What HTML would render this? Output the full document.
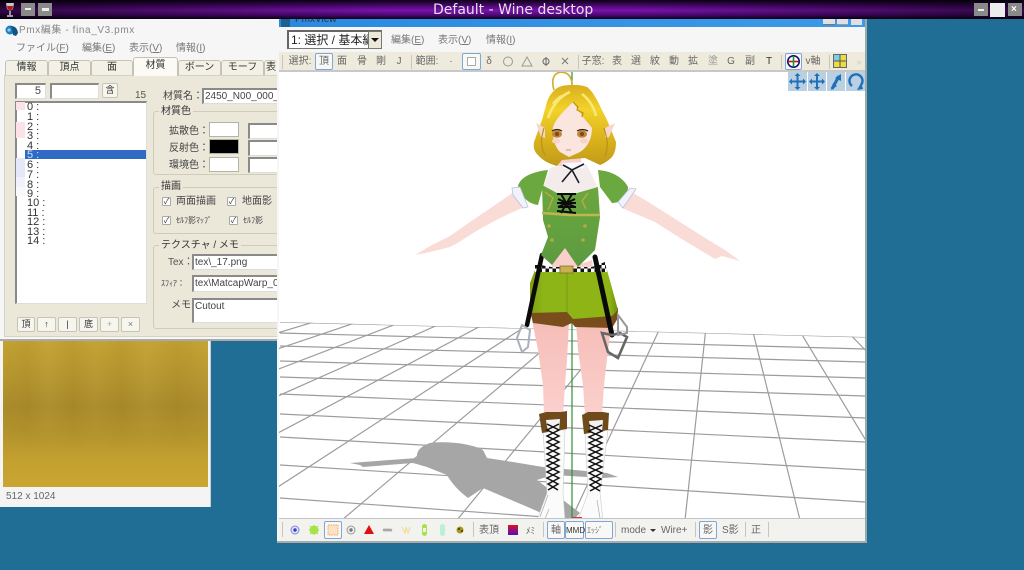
<!DOCTYPE html>
<html lang="ja"><head><meta charset="utf-8"><title>Default - Wine desktop</title>
<style>
html,body{margin:0;padding:0;background:#206d96;}
#root{position:relative;width:1024px;height:570px;overflow:hidden;background:#206d96;font-family:"Liberation Sans","Noto Sans CJK JP",sans-serif;font-size:10px;color:#555;filter:blur(.35px);}
.a{position:absolute;box-sizing:border-box;}
.t{position:absolute;white-space:nowrap;line-height:12px;}
.in{position:absolute;box-sizing:border-box;background:#fff;border:1px solid #ddd;border-top:2px solid #8a8a8a;border-left:2px solid #8a8a8a;overflow:hidden;white-space:nowrap;color:#444;font-size:10px;line-height:13px;padding-left:1px;}
.tab{position:absolute;box-sizing:border-box;top:60px;height:15px;background:#f3f1e6;border:1px solid #c4c2b4;border-bottom:none;border-radius:3px 3px 0 0;text-align:center;color:#333;font-size:10px;line-height:14px;overflow:hidden;white-space:nowrap;}
.grp{position:absolute;box-sizing:border-box;border:1px solid #cfccbc;border-radius:3px;}
.gl{position:absolute;background:#ebe8da;padding:0 2px;font-size:10px;line-height:12px;color:#333;white-space:nowrap;}
.sw{position:absolute;box-sizing:border-box;background:#fff;border:1px solid #b5b3a6;}
.chk{position:absolute;box-sizing:border-box;width:9px;height:9px;background:#fff;border:1px solid #aaa;border-radius:1px;font-size:8px;line-height:7px;text-align:center;color:#333;}
.btn{position:absolute;box-sizing:border-box;top:317px;height:15px;background:#f6f5ee;border:1px solid #c6c4b6;border-radius:2px;text-align:center;font-size:9px;line-height:13px;color:#333;}
.tb{position:absolute;top:56px;font-size:10px;line-height:12px;color:#666;white-space:nowrap;transform:translateX(-50%);}
.box{position:absolute;box-sizing:border-box;background:#f8f8f6;border:1px solid #7ea6d8;border-radius:2px;}
.sep{position:absolute;width:1px;background:#c8c6b8;}
.bt{position:absolute;top:525px;font-size:10px;line-height:12px;color:#666;white-space:nowrap;}
.row{position:absolute;left:27px;font-size:11px;line-height:10px;color:#333;}
.sq{position:absolute;left:16px;width:9px;height:10px;}
</style></head><body><div id="root">

<!-- texture window -->
<div class="a" style="left:0;top:341px;width:211px;height:166px;background:#f4f4f4;border-right:1px solid #ccc;"></div>
<div class="a" style="left:3px;top:341px;width:205px;height:146px;background:linear-gradient(180deg,#c4a332 0,#b8982f 22%,#ab8c2b 45%,#b2932c 62%,#c4a030 82%,#c9a532 100%);"></div>
<div class="a" style="left:3px;top:341px;width:205px;height:110px;background:linear-gradient(90deg,rgba(0,0,0,0) 0,rgba(0,0,0,.03) 12%,rgba(255,255,255,.03) 22%,rgba(0,0,0,.03) 34%,rgba(255,255,255,.02) 45%,rgba(0,0,0,.03) 58%,rgba(255,255,255,.03) 70%,rgba(0,0,0,.03) 85%,rgba(255,255,255,.02) 100%);-webkit-mask-image:linear-gradient(180deg,#000 60%,transparent 100%);mask-image:linear-gradient(180deg,#000 60%,transparent 100%);"></div>
<div class="t" style="left:6px;top:491px;font-size:10px;color:#666;">512 x 1024</div>

<!-- PMX edit window -->
<div class="a" style="left:0;top:19px;width:277px;height:322px;background:#f6f6f6;border-bottom:2px solid #aaa;"></div>
<svg class="a" style="left:5px;top:24px" width="14" height="14" viewBox="0 0 14 14"><circle cx="5" cy="6" r="4.5" fill="#1c7fc4"/><path d="M6 2q6 0 7 7l-2 3-3-1-1-6z" fill="#14527f"/><circle cx="4" cy="6" r="1.6" fill="#8fd0ee"/></svg>
<div class="t" style="left:19px;top:25px;font-size:10px;color:#888;letter-spacing:.6px;">Pmx編集 - fina_V3.pmx</div>
<div class="t" style="left:16px;top:43px;font-size:10px;color:#777;">ファイル(<u>F</u>)</div>
<div class="t" style="left:82px;top:43px;font-size:10px;color:#777;">編集(<u>E</u>)</div>
<div class="t" style="left:129px;top:43px;font-size:10px;color:#777;">表示(<u>V</u>)</div>
<div class="t" style="left:176px;top:43px;font-size:10px;color:#777;">情報(<u>I</u>)</div>

<div class="a" style="left:4px;top:75px;width:273px;height:262px;background:#ebe8da;border:1px solid #d4d2c4;border-right:none;"></div>
<div class="tab" style="left:5px;width:43px;">情報</div>
<div class="tab" style="left:48px;width:43px;">頂点</div>
<div class="tab" style="left:91px;width:42px;">面</div>
<div class="tab" style="left:133px;width:45px;top:57px;height:19px;background:#fbfaf4;line-height:16px;">材質</div>
<div class="tab" style="left:178px;width:43px;">ボーン</div>
<div class="tab" style="left:221px;width:43px;">モーフ</div>
<div class="tab" style="left:264px;width:13px;border-right:none;">表</div>

<div class="in" style="left:15px;top:83px;width:31px;height:16px;text-align:right;padding-right:4px;font-size:11px;">5</div>
<div class="in" style="left:50px;top:83px;width:49px;height:16px;"></div>
<div class="a" style="left:102px;top:83px;width:16px;height:15px;background:#f6f5ee;border:1px solid #c6c4b6;border-radius:2px;text-align:center;font-size:9px;line-height:13px;color:#333;">含</div>
<div class="t" style="left:135px;top:90px;font-size:10px;color:#555;">15</div>
<div class="t" style="left:163px;top:91px;font-size:10px;color:#444;">材質名：</div>
<div class="in" style="left:202px;top:88px;width:75px;height:16px;font-size:10px;border-right:none;">2450_N00_000_</div>

<div class="in" style="left:15px;top:101px;width:132px;height:203px;"></div>
<div class="sq" style="top:102px;height:8px;background:#fbe2e6;"></div>
<div class="sq" style="top:122px;height:16px;background:#fbe2e6;"></div>
<div class="sq" style="top:158px;height:19px;background:#e4e8f8;"></div>
<div class="sq" style="top:177px;background:#f0f1fb;"></div>
<div class="sq" style="top:187px;height:9px;background:#f7f7fc;"></div>
<div class="a" style="left:25px;top:150px;width:121px;height:9px;background:#316ac5;"></div>
<div class="row" style="top:102px;">0 :</div>
<div class="row" style="top:112px;">1 :</div>
<div class="row" style="top:122px;">2 :</div>
<div class="row" style="top:131px;">3 :</div>
<div class="row" style="top:141px;">4 :</div>
<div class="row" style="top:150px;color:#cfe0ff;">5 :</div>
<div class="row" style="top:160px;">6 :</div>
<div class="row" style="top:170px;">7 :</div>
<div class="row" style="top:180px;">8 :</div>
<div class="row" style="top:189px;">9 :</div>
<div class="row" style="top:198px;">10 :</div>
<div class="row" style="top:208px;">11 :</div>
<div class="row" style="top:217px;">12 :</div>
<div class="row" style="top:227px;">13 :</div>
<div class="row" style="top:236px;">14 :</div>

<div class="btn" style="left:17px;width:18px;">頂</div>
<div class="btn" style="left:37px;width:19px;">↑</div>
<div class="btn" style="left:58px;width:19px;">|</div>
<div class="btn" style="left:79px;width:19px;">底</div>
<div class="btn" style="left:100px;width:19px;color:#aaa;">+</div>
<div class="btn" style="left:121px;width:19px;color:#777;">×</div>

<div class="grp" style="left:153px;top:111px;width:130px;height:64px;"></div>
<div class="gl" style="left:159px;top:106px;">材質色</div>
<div class="t" style="left:169px;top:126px;color:#444;">拡散色：</div>
<div class="t" style="left:169px;top:143px;color:#444;">反射色：</div>
<div class="t" style="left:169px;top:160px;color:#444;">環境色：</div>
<div class="sw" style="left:209px;top:122px;width:30px;height:15px;"></div>
<div class="sw" style="left:209px;top:139px;width:30px;height:15px;background:#000;"></div>
<div class="sw" style="left:209px;top:157px;width:30px;height:15px;"></div>
<div class="in" style="left:248px;top:123px;width:29px;height:16px;border-right:none;"></div>
<div class="in" style="left:248px;top:140px;width:29px;height:16px;border-right:none;"></div>
<div class="in" style="left:248px;top:157px;width:29px;height:16px;border-right:none;"></div>

<div class="grp" style="left:153px;top:187px;width:130px;height:47px;"></div>
<div class="gl" style="left:159px;top:181px;">描画</div>
<div class="chk" style="left:162px;top:197px;">✓</div>
<div class="t" style="left:176px;top:196px;color:#444;">両面描画</div>
<div class="chk" style="left:227px;top:197px;">✓</div>
<div class="t" style="left:242px;top:196px;color:#444;">地面影</div>
<div class="chk" style="left:162px;top:216px;">✓</div>
<div class="t" style="left:176px;top:215px;color:#444;font-size:8px;">ｾﾙﾌ影ﾏｯﾌﾟ</div>
<div class="chk" style="left:229px;top:216px;">✓</div>
<div class="t" style="left:243px;top:215px;color:#444;font-size:8px;">ｾﾙﾌ影</div>

<div class="grp" style="left:153px;top:245px;width:130px;height:84px;"></div>
<div class="gl" style="left:159px;top:240px;">テクスチャ / メモ</div>
<div class="t" style="left:168px;top:257px;color:#555;">Tex：</div>
<div class="in" style="left:192px;top:254px;width:85px;height:16px;border-right:none;">tex\_17.png</div>
<div class="t" style="left:161px;top:278px;color:#444;font-size:8px;">ｽﾌｨｱ：</div>
<div class="in" style="left:192px;top:275px;width:85px;height:17px;border-right:none;">tex\MatcapWarp_03</div>
<div class="t" style="left:171px;top:300px;color:#444;">メモ：</div>
<div class="in" style="left:192px;top:298px;width:85px;height:25px;border-right:none;">Cutout</div>

<!-- PmxView window -->
<div class="a" style="left:277px;top:19px;width:590px;height:524px;background:#f6f6f6;border-right:2px solid #9aa;border-bottom:2px solid #aaa;"></div>
<div class="a" style="left:279px;top:19px;width:586px;height:8px;background:linear-gradient(90deg,#2a8ae0,#3c9ae8);overflow:hidden;"></div>
<div class="t" style="left:295px;top:14px;font-size:10px;color:#333;height:13px;">PmxView</div>
<div class="a" style="left:281px;top:19px;width:9px;height:8px;background:#1c5f90;"></div>
<div class="a" style="left:823px;top:19px;width:12px;height:6px;background:#dfe0e4;border-bottom:1px solid #777;"></div>
<div class="a" style="left:837px;top:19px;width:11px;height:6px;background:#dfe0e4;border-bottom:1px solid #999;"></div>
<div class="a" style="left:851px;top:19px;width:11px;height:6px;background:#dfe0e4;"></div>

<div class="a" style="left:287px;top:30px;width:95px;height:19px;background:#fff;border:1px solid #777;border-top:2px solid #666;border-left:2px solid #666;overflow:hidden;white-space:nowrap;font-size:12px;line-height:16px;color:#222;padding-left:2px;">1: 選択 / 基本編集</div>
<div class="a" style="left:368px;top:31px;width:14px;height:18px;background:#ece9d8;border:1px solid #777;"></div>
<div class="a" style="left:371px;top:38px;width:0;height:0;border:4px solid transparent;border-top:4px solid #111;"></div>
<div class="t" style="left:391px;top:35px;color:#777;">編集(<u>E</u>)</div>
<div class="t" style="left:438px;top:35px;color:#777;">表示(<u>V</u>)</div>
<div class="t" style="left:486px;top:35px;color:#777;">情報(<u>I</u>)</div>

<!-- top toolbar -->
<div class="a" style="left:279px;top:52px;width:586px;height:20px;background:#eeebdc;border-bottom:2px solid #c8c8c8;"></div>
<div class="sep" style="left:282px;top:55px;height:14px;"></div>
<div class="tb" style="left:300px;">選択:</div>
<div class="box" style="left:315px;top:53px;width:18px;height:17px;"></div>
<div class="tb" style="left:324px;">頂</div><div class="tb" style="left:342px;">面</div><div class="tb" style="left:362px;">骨</div><div class="tb" style="left:381px;">剛</div><div class="tb" style="left:399px;">J</div>
<div class="sep" style="left:411px;top:55px;height:14px;"></div>
<div class="tb" style="left:427px;">範囲:</div><div class="tb" style="left:451px;">·</div>
<div class="box" style="left:462px;top:53px;width:19px;height:17px;"></div>
<div class="a" style="left:467px;top:57px;width:9px;height:9px;border:1px solid #aaa;background:#fff;"></div>
<div class="tb" style="left:489px;">δ</div>
<svg class="a" style="left:500px;top:54px" width="76" height="15" viewBox="0 0 76 15" fill="none" stroke="#999"><circle cx="8" cy="7.5" r="4.5"/><path d="M27 3l5 9h-10z"/><circle cx="46" cy="7.5" r="3" stroke="#666"/><path d="M46 3v9" stroke="#666"/><path d="M62 4l6 6M68 4l-6 6" stroke="#777"/></svg>
<div class="sep" style="left:578px;top:55px;height:14px;"></div>
<div class="tb" style="left:593px;">子窓:</div>
<div class="tb" style="left:617px;">表</div><div class="tb" style="left:636px;">選</div><div class="tb" style="left:655px;">紋</div><div class="tb" style="left:674px;">動</div><div class="tb" style="left:693px;">拡</div><div class="tb" style="left:713px;color:#999;">塗</div><div class="tb" style="left:731px;">G</div><div class="tb" style="left:750px;">副</div><div class="tb" style="left:769px;color:#333;">T</div>
<div class="sep" style="left:781px;top:55px;height:14px;"></div>
<div class="box" style="left:785px;top:53px;width:17px;height:17px;"></div>
<svg class="a" style="left:786px;top:54px" width="15" height="15" viewBox="0 0 15 15"><circle cx="7.5" cy="7.5" r="5.7" fill="#fff" stroke="#101080" stroke-width="1.6"/><path d="M2 7.5h11" stroke="#c01818" stroke-width="1.6"/><path d="M7.5 2v11" stroke="#1a9a1a" stroke-width="1.6"/></svg>
<div class="tb" style="left:813px;">v軸</div>
<div class="sep" style="left:829px;top:55px;height:14px;"></div>
<svg class="a" style="left:833px;top:54px" width="14" height="14" viewBox="0 0 14 14"><rect x=".5" y=".5" width="13" height="13" fill="#eedc3a" stroke="#667"/><rect x="1" y="1" width="6" height="6" fill="#7ad0e8"/><path d="M7 1v12M1 7h12" stroke="#556"/></svg>
<div class="tb" style="left:859px;color:#ccc;font-size:9px;">»</div>

<!-- 3D view -->
<svg class="a" style="left:0;top:0" width="1024" height="570" viewBox="0 0 1024 570">
<defs>
<clipPath id="v"><rect x="279" y="72" width="586" height="446"/></clipPath>
<clipPath id="g"><polygon points="279,322 865,337 865,518 279,518"/></clipPath>
<linearGradient id="hair" x1="0" y1="0" x2="0" y2="1"><stop offset="0" stop-color="#d9ae1e"/><stop offset=".3" stop-color="#f2d22a"/><stop offset=".65" stop-color="#dcb41c"/><stop offset="1" stop-color="#c09a1a"/></linearGradient>
<linearGradient id="top" x1="0" y1="0" x2="0" y2="1"><stop offset="0" stop-color="#6ba83f"/><stop offset="1" stop-color="#5c9a40"/></linearGradient>
<linearGradient id="sh" x1="0" y1="0" x2="1" y2="0"><stop offset="0" stop-color="#7f9f10"/><stop offset=".15" stop-color="#8db418"/><stop offset=".9" stop-color="#8fb514"/><stop offset="1" stop-color="#6f8f12"/></linearGradient>
<linearGradient id="leg" x1="0" y1="0" x2="0" y2="1"><stop offset="0" stop-color="#f6bdb8"/><stop offset="1" stop-color="#fbd0cc"/></linearGradient>
<pattern id="chk" x="535" y="265" width="7" height="7" patternUnits="userSpaceOnUse"><rect width="7" height="7" fill="#fff"/><rect width="3.5" height="3.5" fill="#111"/><rect x="3.5" y="3.5" width="3.5" height="3.5" fill="#111"/></pattern>
</defs>
<g clip-path="url(#v)">
<rect x="279" y="72" width="586" height="446" fill="#fff"/>
<g clip-path="url(#g)" stroke="#9c9c9c" stroke-width="1.2" fill="none">
<path d="M280 322L865 337M280 333L865 349M280 346L865 362M280 361L865 378M280 377L865 396M280 394L865 418M280 414L865 442M280 437L865 470M280 465L865 502M280 498L865 540"/>
<path d="M342 520L602 300M227 520L566 300M113 520L530 300M-1 520L494 300M-116 520L459 300M-230 520L423 300M-345 520L387 300M-460 520L351 300M-574 520L316 300M-688 520L280 300M457 520L638 300M571 520L673 300M685 520L709 300M800 520L745 300M914 520L781 300M1029 520L817 300M1143 520L852 300M1258 520L888 300M1372 520L924 300M1487 520L960 300"/>
</g>
<!-- shadow -->
<path fill="#a6a6a6" d="M350 463L417 458C416 452 420 446 430 443C445 441 470 443 483 450L487 458L513 462L543 467L607 473L618 477L603 478L553 475L537 480L580 513L573 520L557 520L530 508L483 488L468 498C460 492 452 484 447 475L427 467L413 463L363 467L360 465Z"/>
<!-- axis -->
<path d="M572 72V518" stroke="#2f8f35" stroke-width="1.2"/>
<!-- legs -->
<polygon fill="url(#leg)" points="532,320 569,322 567,360 565,385 563,415 544,415 543,385 538,350"/>
<polygon fill="url(#leg)" points="576,322 612,322 608,350 604,385 602,415 585,415 583,385 578,350"/>
<!-- boots -->
<polygon fill="#fbfbfb" stroke="#ccc" stroke-width=".6" points="543,430 565,430 563,493 565,520 537,520 547,493"/>
<polygon fill="#fbfbfb" stroke="#ccc" stroke-width=".6" points="585,433 608,430 600,493 603,520 578,520 588,493"/>
<path d="M539 414L546 412L561 412L567 411L567 429L542 433Z" fill="#6f4a1a"/>
<path d="M582 415L588 412L603 412L609 413L608 430L584 434Z" fill="#6f4a1a"/>
<polygon fill="#f4f2f0" points="546,420 560,419 559,432 548,432"/>
<polygon fill="#f4f2f0" points="589,421 603,420 602,432 591,433"/>
<path d="M547 424L559 430L547 436L559 442L547 448L559 454L547 460L559 466L547 472L559 478L548 484L558 490M559 424L547 430L559 436L547 442L559 448L547 454L559 460L547 466L559 472L547 478L558 484L548 490" stroke="#111" stroke-width="1.5" fill="none"/>
<path d="M589 425L602 431L589 437L602 443L589 449L602 455L589 461L602 467L589 473L601 479L590 485L600 491M602 425L589 431L602 437L589 443L602 449L589 455L602 461L589 467L602 473L590 479L601 485L590 491" stroke="#111" stroke-width="1.5" fill="none"/>
<path d="M540 517l8 -22M545 519l4-10M597 500l3 18" stroke="#aaa" stroke-width=".7" fill="none"/>
<rect x="572" y="517" width="10" height="2" fill="#d33"/>
<!-- shorts -->
<polygon fill="#7a4e1c" points="530,311 533,323 563,327 572,323 575,327 612,328 618,318 618,308"/>
<polygon fill="url(#sh)" points="535,270 607,270 618,310 612,316 573,319 567,312 530,313 530,283"/>
<path d="M567 272V312" stroke="#7a9c14" stroke-width="1"/>
<!-- midriff -->
<polygon fill="#f8cfca" points="552,262 565,247 578,265 592,260 593,268 552,268"/>
<!-- belt -->
<polygon fill="url(#chk)" points="535,264 551,267 592,267 605,262 607,272 535,272"/>
<rect x="560" y="266" width="13" height="7" fill="#c8b050" stroke="#857030" stroke-width=".8"/>
<!-- straps -->
<path d="M542 255L527 325" stroke="#0a0a0a" stroke-width="4.5" stroke-linecap="round"/>
<path d="M595 257L612 335" stroke="#0a0a0a" stroke-width="5" stroke-linecap="round"/>
<polygon fill="none" stroke="#aab0bb" stroke-width="2" points="522,325 517,338 522,352 528,347 530,330"/>
<polygon fill="none" stroke="#666" stroke-width="2.6" points="602,333 608,352 618,358 627,337 620,333 612,335"/>
<polygon fill="none" stroke="#999" stroke-width="2" points="618,315 627,327 627,333 618,335"/>
<!-- arms -->
<path fill="#fadcd7" d="M514 192L495 205L470 222L450 236L430 246L415 255L430 252L450 247L456 244L478 230L500 218L522 208Z"/>
<path fill="#fadcd7" d="M628 190L650 203L680 222L702 236L725 250L740 261L722 256L715 259L700 250L680 238L655 222L622 208Z"/>
<!-- top -->
<polygon fill="#f4ecea" points="543,188 550,168 570,163 587,165 598,188 580,200 560,200"/>
<path fill="#6ba83f" d="M518 186C520 178 530 172 548 170L543 187L538 205C530 204 521 198 518 186Z"/>
<path fill="#6ba83f" d="M598 170C610 171 622 176 628 187C628 195 622 203 612 203L600 187Z"/>
<polygon fill="url(#top)" points="542,185 557,193 577,193 598,187 600,217 597,237 595,250 578,267 565,248 552,265 541,255 548,237 543,220"/>
<polygon fill="#f2f2fa" stroke="#b8c0e0" stroke-width=".8" points="512,188 520,187 528,207 523,208 513,195"/>
<polygon fill="#f2f2fa" stroke="#b8c0e0" stroke-width=".8" points="618,202 630,188 636,189 623,208"/>
<path d="M542 213L570 215L600 215" stroke="#bdb84e" stroke-width="2.4" fill="none"/>
<path d="M545 192l8 6-5 12M588 193l-6 8 4 8" stroke="#b7a944" stroke-width="1.5" fill="none"/>
<circle cx="549" cy="226" r="1.8" fill="#b5a848"/><circle cx="585" cy="226" r="1.8" fill="#b5a848"/><circle cx="552" cy="240" r="1.8" fill="#b5a848"/><circle cx="583" cy="240" r="1.8" fill="#b5a848"/>
<!-- lacing -->
<path d="M557 194H576M558 199L575 207M575 199L558 207M557 203H576M558 207H576M557 211L576 213M561 194L572 213M572 194L561 213" stroke="#0c0c0c" stroke-width="2" fill="none"/>
<!-- neck -->
<polygon fill="#f8d0cb" points="560,152 580,152 582,166 558,166"/>
<polygon fill="#f8f8ff" points="562,163 585,162 584,168 564,169"/>
<path d="M563 165L572 170L584 164M572 170L562 182M572 170L579 183" stroke="#1c1c28" stroke-width="1.6" fill="none"/>
<!-- hair back -->
<path d="M572 85C565 85 561 86 557 88C552 92 549 96 547 102L542 120L534 142C533 149 535 152 538 155C543 161 550 164 557 166L562 160L585 158L600 165C605 163 609 160 612 157C615 153 616 148 616 142L607 120L598 102C594 94 590 89 587 87C582 85 577 85 572 85Z" fill="url(#hair)"/>
<!-- ears -->
<polygon fill="#f8d6d0" points="536,123 545,128 545,138 541,137"/>
<polygon fill="#f8d6d0" points="615,123 605,128 605,138 609,137"/>
<!-- face -->
<path d="M553 127C556 118 565 110 573 102L583 117L592 128C592 138 588 147 580 152L569 157L560 152C555 147 552 138 553 127Z" fill="#fbe5df"/>
<path d="M548 118C552 106 560 96 570 92M553 104C556 100 558 98 562 96M596 116C594 108 590 100 582 94" stroke="#f9e874" stroke-width="2.6" fill="none"/>
<path d="M544 128C541 138 540 146 545 155M604 128C607 138 609 146 605 156M573 102L578 107L577 110L583 113L582 117" stroke="#b8921a" stroke-width="1.2" fill="none"/>
<ellipse cx="557" cy="134" rx="5" ry="3.800" fill="#c08438"/>
<ellipse cx="582" cy="134" rx="5" ry="3.800" fill="#c08438"/>
<circle cx="557" cy="134" r="2" fill="#7a4a18"/><circle cx="582" cy="134" r="2" fill="#7a4a18"/>
<path d="M552 131Q557 128 562 131M577 131Q582 128 588 131" stroke="#3a2414" stroke-width="1.3" fill="none"/>
<ellipse cx="556" cy="141" rx="4" ry="2.500" fill="#f9d2ca"/><ellipse cx="584" cy="141" rx="4" ry="2.500" fill="#f9d2ca"/>
<path d="M566 150h5" stroke="#b08078" stroke-width=".8"/>
<path d="M572 85C572 72 561 70 556 74C551 78 553 87 554 90" stroke="#d3ab2c" stroke-width="1.6" fill="none"/>
</g>
<!-- view buttons -->
<g>
<rect x="788" y="72" width="19" height="19" fill="#b8d0e2"/><rect x="808" y="72" width="18" height="19" fill="#b8d0e2"/><rect x="827" y="72" width="18" height="19" fill="#b8d0e2"/><rect x="846" y="72" width="19" height="19" fill="#b8d0e2"/>
<g fill="none" stroke="#1f70b8" stroke-width="2"><path d="M790 81.500H805M797.500 74V89"/><path d="M810 81.500H824M817 74V89"/><path d="M832 89L839 76" stroke-width="3"/><path d="M861 85A6.500 6.500 0 1 0 852 86" stroke-width="2.400"/></g>
<g fill="#1f70b8"><path d="M797.500 73l3 3h-6zM797.500 90l3-3h-6zM789 81.500l3-3v6zM806 81.500l-3-3v6z"/><path d="M817 73l3 3h-6zM817 90l3-3h-6zM809 81.500l3-3v6zM825 81.500l-3-3v6z"/><path d="M841 74l0 7-6-3zM831 90l2-7 4 3z"/><path d="M857 90l6-1-2-6z"/></g>
</g>
</svg>

<!-- bottom toolbar -->
<div class="a" style="left:279px;top:518px;width:586px;height:23px;background:#f2f2ef;border-top:1px solid #c4c4c4;"></div>
<div class="sep" style="left:282px;top:522px;height:15px;"></div>
<div class="box" style="left:324px;top:521px;width:18px;height:18px;"></div>
<svg class="a" style="left:286px;top:521px" width="190" height="18" viewBox="286 521 190 18">
<circle cx="295" cy="530" r="4" fill="#dfe2fa" stroke="#8088d8"/><circle cx="295" cy="530" r="1.700" fill="#3a40b8"/>
<circle cx="314" cy="530" r="4.500" fill="#a6e34a"/><path d="M309 530h10M314 525v10M310 526l8 8M318 526l-8 8" stroke="#a6e34a"/>
<rect x="328" y="525" width="10" height="10" fill="#fbe3c4" stroke="#eba860" stroke-dasharray="1.500 1"/>
<circle cx="351" cy="530" r="4" fill="#eee" stroke="#999"/><circle cx="351" cy="530" r="1.700" fill="#777"/>
<path d="M369 525l5 9h-10z" fill="#e01010"/>
<path d="M383 531l1-2 1 2 1-2 1 2 1-2 1 2 1-2 1 2 1-2" stroke="#999" fill="none"/>
<path d="M402 527l3 6 1-6 2 6 2-6" stroke="#f0e0a0" fill="none" stroke-width="1.300"/>
<rect x="422" y="524" width="5" height="12" rx="2.500" fill="#a8e050"/><rect x="423" y="528" width="3" height="4" fill="#eef8d8"/>
<rect x="440" y="524" width="5" height="12" rx="2.500" fill="#b8f0d8"/>
<circle cx="460" cy="530" r="3.500" fill="#a89a10"/><circle cx="459" cy="529" r="1" fill="#333"/><circle cx="462" cy="531" r="1" fill="#333"/>
</svg>
<div class="sep" style="left:473px;top:522px;height:15px;"></div>
<div class="bt" style="left:479px;">表頂</div>
<div class="a" style="left:508px;top:525px;width:10px;height:10px;background:linear-gradient(180deg,#e01020,#5010c0);"></div>
<div class="bt" style="left:526px;font-size:9px;">ﾒﾐ</div>
<div class="sep" style="left:543px;top:522px;height:15px;"></div>
<div class="box" style="left:547px;top:521px;width:18px;height:18px;"></div><div class="bt" style="left:551px;">軸</div>
<div class="box" style="left:565px;top:521px;width:19px;height:18px;"></div><div class="bt" style="left:566px;font-size:8px;color:#333;">MMD</div>
<div class="box" style="left:585px;top:521px;width:28px;height:18px;"></div><div class="bt" style="left:587px;font-size:8px;">ｴｯｼﾞ</div>
<div class="sep" style="left:615px;top:522px;height:15px;"></div>
<div class="bt" style="left:621px;">mode</div><div class="a" style="left:650px;top:529px;width:0;height:0;border:3px solid transparent;border-top:3px solid #333;"></div>
<div class="bt" style="left:661px;">Wire+</div>
<div class="sep" style="left:695px;top:522px;height:15px;"></div>
<div class="box" style="left:699px;top:521px;width:18px;height:18px;"></div><div class="bt" style="left:703px;">影</div>
<div class="bt" style="left:722px;">S影</div>
<div class="sep" style="left:745px;top:522px;height:15px;"></div>
<div class="bt" style="left:751px;">正</div>
<div class="sep" style="left:768px;top:522px;height:15px;"></div>

<!-- top bar (drawn last, over window tops) -->
<div class="a" style="left:0;top:0;width:1024px;height:19px;background:linear-gradient(180deg,#0c0014 0,#3f0660 25%,#7a12ae 55%,#4a0870 80%,#0c0014 100%);"></div>
<div class="a" style="left:0;top:0;width:1024px;height:19px;background:linear-gradient(90deg,rgba(0,0,0,.6) 0,rgba(0,0,0,.4) 12%,rgba(0,0,0,0) 38%,rgba(0,0,0,0) 62%,rgba(0,0,0,.4) 88%,rgba(0,0,0,.6) 100%);"></div>
<svg class="a" style="left:3px;top:2px" width="14" height="16" viewBox="0 0 14 16"><path d="M3 1h8l-1 6q-3 3-6 0z" fill="#c8c8c8"/><path d="M4 4h6l-.5 3q-2.500 2-5 0z" fill="#b01818"/><path d="M7 9v4M4 14h6" stroke="#ccc" stroke-width="1.400" fill="none"/></svg>
<div class="a" style="left:21px;top:3px;width:14px;height:13px;background:#8a8a8a;"></div><div class="a" style="left:25px;top:8px;width:6px;height:2px;background:#eee;"></div>
<div class="a" style="left:38px;top:3px;width:14px;height:13px;background:#8a8a8a;"></div><div class="a" style="left:42px;top:8px;width:7px;height:3px;background:#eee;"></div>
<div class="t" style="left:433px;top:2px;font:14px/16px 'DejaVu Sans',sans-serif;color:#e4e0ea;">Default - Wine desktop</div>
<div class="a" style="left:974px;top:3px;width:14px;height:13px;background:#8a8a8a;"></div><div class="a" style="left:978px;top:9px;width:6px;height:2px;background:#eee;"></div>
<div class="a" style="left:990px;top:3px;width:15px;height:14px;background:#ececec;"></div>
<div class="a" style="left:1008px;top:3px;width:14px;height:13px;background:#8a8a8a;"></div><div class="t" style="left:1011px;top:4px;color:#fff;font-weight:bold;font-size:10px;">×</div>
</div></body></html>
